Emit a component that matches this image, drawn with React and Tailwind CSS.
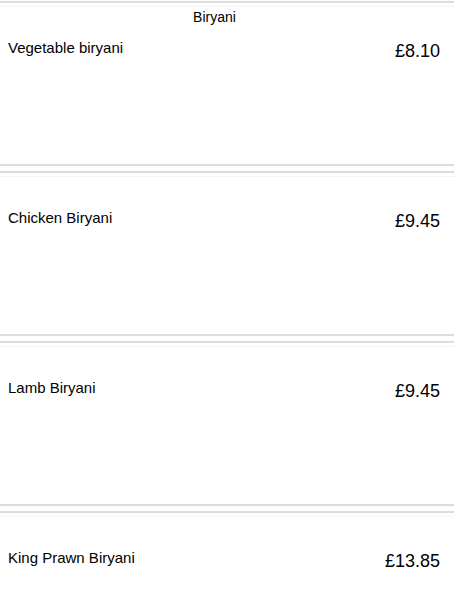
import React from "react";

const items = [
  { name: "Vegetable biryani", price: "£8.10", title: "Biryani" },
  { name: "Chicken Biryani", price: "£9.45" },
  { name: "Lamb Biryani", price: "£9.45" },
  { name: "King Prawn Biryani", price: "£13.85" },
];

export default function App() {
  return (
    <div
      className="w-[454px] h-[600px] overflow-hidden bg-white pt-px flex flex-col gap-[5px] text-black"
      style={{ fontFamily: '"Liberation Sans", Arial, sans-serif' }}
    >
      {items.map((it, i) => (
        <div
          key={i}
          className="h-[165px] shrink-0 border-t-2 border-b-2 border-[#dcdcdc] shadow-[0_0_1px_rgba(0,0,0,0.08)]"
        >
          <div className="h-px bg-[#f4f4f4] mt-[3px]"></div>
          <div className="w-[429px] text-center text-[14px] leading-4 h-4 mt-[2px]">
            {it.title || ""}
          </div>
          <div className="flex justify-between items-start pl-2 pr-[14px] mt-[15px]">
            <div className="text-[15px] leading-4">{it.name}</div>
            <div className="text-[18px] leading-5 mt-px">{it.price}</div>
          </div>
        </div>
      ))}
    </div>
  );
}
